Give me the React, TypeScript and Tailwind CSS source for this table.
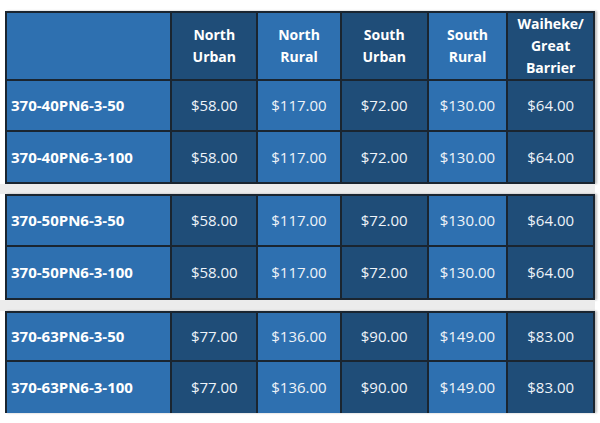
import React from "react";

const cols = ["w-[166px]", "w-[86px]", "w-[84px]", "w-[87px]", "w-[80px]", "w-[87px]"];
const bgs = ["bg-[#2e70b0]", "bg-[#1f4d78]", "bg-[#2e70b0]", "bg-[#1f4d78]", "bg-[#2e70b0]", "bg-[#1f4d78]"];

type Row = { label: string; vals: string[] };

const g1: Row[] = [
  { label: "370-40PN6-3-50", vals: ["$58.00", "$117.00", "$72.00", "$130.00", "$64.00"] },
  { label: "370-40PN6-3-100", vals: ["$58.00", "$117.00", "$72.00", "$130.00", "$64.00"] },
];
const g2: Row[] = [
  { label: "370-50PN6-3-50", vals: ["$58.00", "$117.00", "$72.00", "$130.00", "$64.00"] },
  { label: "370-50PN6-3-100", vals: ["$58.00", "$117.00", "$72.00", "$130.00", "$64.00"] },
];
const g3: Row[] = [
  { label: "370-63PN6-3-50", vals: ["$77.00", "$136.00", "$90.00", "$149.00", "$83.00"] },
  { label: "370-63PN6-3-100", vals: ["$77.00", "$136.00", "$90.00", "$149.00", "$83.00"] },
];

function DataRow({ row, h, last }: { row: Row; h: string; last?: boolean }) {
  const bb = last ? "" : "border-b-2";
  return (
    <div className={`flex ${h}`}>
      <div className={`${cols[0]} ${bgs[0]} ${bb} border-r-2 border-[#1a2530] flex items-center pl-[4px] font-bold text-[15px] text-white`}>
        {row.label}
      </div>
      {row.vals.map((v, i) => (
        <div
          key={i}
          className={`${cols[i + 1]} ${bgs[i + 1]} ${bb} border-r-2 border-[#1a2530] flex items-center justify-center text-[15px] text-[#eef3f8]`}
        >
          {v}
        </div>
      ))}
    </div>
  );
}

const headers = [[""], ["North", "Urban"], ["North", "Rural"], ["South", "Urban"], ["South", "Rural"], ["Waiheke/", "Great", "Barrier"]];

export default function App() {
  return (
    <div
      className="w-[600px] h-[423px] bg-white overflow-hidden pt-[11px]"
      style={{ fontFamily: '"Open Sans", "Liberation Sans", sans-serif' }}
    >
      <div className="ml-[5px] w-[590px] border-l-2 border-t-2 border-[#1a2530] shadow-[2px_0_2px_rgba(0,0,0,0.25)]">
        <div className="flex h-[68px]">
          {headers.map((lines, i) => (
            <div
              key={i}
              className={`${cols[i]} ${bgs[i]} border-b-2 border-r-2 border-[#1a2530] flex flex-col items-center justify-center text-white font-bold text-[14px] leading-[22px]`}
            >
              {lines.map((l, j) => (
                <span key={j}>{l}</span>
              ))}
            </div>
          ))}
        </div>
        <DataRow row={g1[0]} h="h-[51px]" />
        <DataRow row={g1[1]} h="h-[52px]" />
      </div>
      <div className="w-[595px] h-[10px] bg-[#ececec]" />
      <div className="ml-[5px] w-[590px] border-l-2 border-t-2 border-[#1a2530] shadow-[2px_0_2px_rgba(0,0,0,0.25)]">
        <DataRow row={g2[0]} h="h-[51px]" />
        <DataRow row={g2[1]} h="h-[53px]" />
      </div>
      <div className="w-[595px] h-[11px] bg-[#ececec]" />
      <div className="ml-[5px] w-[590px] border-l-2 border-t-2 border-[#1a2530] shadow-[2px_0_2px_rgba(0,0,0,0.25)]">
        <DataRow row={g3[0]} h="h-[49px]" />
        <DataRow row={g3[1]} h="h-[51px]" last />
      </div>
    </div>
  );
}
